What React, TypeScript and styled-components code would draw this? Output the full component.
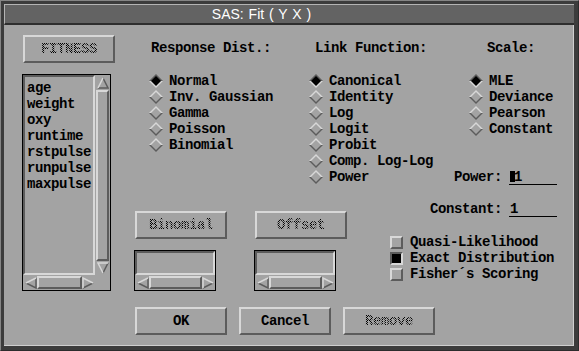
import React from 'react';
import styled, { createGlobalStyle, css } from 'styled-components';

const c = {
  face: '#a3a3a3',
  light: '#d8d8d8',
  dark: '#5c5c5c',
  title: '#636363',
  frame: '#3c3c3c',
};

const GlobalStyle = createGlobalStyle`
  html, body { margin: 0; padding: 0; background: ${c.face}; }
  body { font-family: 'Liberation Mono', 'DejaVu Sans Mono', monospace; }
`;

const monoText = css`
  font-family: 'Liberation Mono', 'DejaVu Sans Mono', monospace;
  font-weight: bold;
  font-size: 14px;
  letter-spacing: -0.4px;
  line-height: 16px;
  color: #000;
  white-space: nowrap;
`;

const raised = css`
  box-sizing: border-box;
  border: 2px solid;
  border-color: ${c.light} ${c.dark} ${c.dark} ${c.light};
`;

const sunken = css`
  box-sizing: border-box;
  border: 2px solid;
  border-color: ${c.dark} ${c.light} ${c.light} ${c.dark};
`;

const Frame = styled.div`
  box-sizing: border-box;
  width: 579px;
  height: 351px;
  background: ${c.frame};
  border-top: 1px solid #858585;
  border-left: 1px solid #858585;
  border-right: 1px solid #2c2c2c;
  border-bottom: 1px solid #2c2c2c;
  padding: 3px 4px 4px 3px;
  display: flex;
  flex-direction: column;
`;

const TitleBar = styled.div`
  box-sizing: border-box;
  height: 21px;
  background: ${c.title};
  border-top: 1px solid #b4b4b4;
  border-left: 1px solid #b4b4b4;
  border-bottom: 2px solid #2e2e2e;
  padding-right: 56px;
  color: #fff;
  font-family: 'Liberation Sans', Arial, sans-serif;
  font-size: 14px;
  word-spacing: 1px;
  display: flex;
  align-items: center;
  justify-content: center;
`;

const Body = styled.div`
  box-sizing: border-box;
  flex: 1;
  background: ${c.face};
  border-right: 1px solid #cfcfcf;
  border-bottom: 1px solid #cfcfcf;
  padding: 10px 0 0 18px;
  display: flex;
`;

const LeftColumn = styled.div`
  width: 93px;
  display: flex;
  flex-direction: column;
`;

const PushButton = styled.div<{ $shift?: number }>`
  ${raised}
  width: 92px;
  height: 28px;
  margin-left: ${p => p.$shift ?? 0}px;
  background: ${c.face};
  display: flex;
  align-items: center;
  justify-content: center;
  ${monoText}
`;

const Stippled = styled.span`
  color: transparent;
  background-image: repeating-conic-gradient(#000 0% 25%, transparent 0% 50%);
  background-size: 2px 2px;
  -webkit-background-clip: text;
  background-clip: text;
`;

const ListBox = styled.div`
  box-sizing: border-box;
  width: 89px;
  height: 217px;
  margin-top: 11px;
  border: 1px solid #000;
  display: grid;
  grid-template-columns: 1fr 15px;
  grid-template-rows: 1fr 15px;
`;

const ListArea = styled.div`
  ${sunken}
  padding: 3px 0 0 2px;
  display: flex;
  flex-direction: column;
  overflow: hidden;
`;

const ListItem = styled.div`
  ${monoText}
`;

const VScroll = styled.div`
  display: flex;
  flex-direction: column;
  align-items: center;
  padding: 2px 0 1px;
  gap: 1px;
`;

const VThumb = styled.div`
  ${raised}
  flex: 1;
  width: 13px;
`;

const HScroll = styled.div`
  display: flex;
  align-items: center;
  padding: 0 1px 0 2px;
`;

const HThumb = styled.div`
  ${raised}
  flex: 1;
  height: 13px;
`;

const Corner = styled.div``;

const SmallBox = styled.div`
  box-sizing: border-box;
  width: 82px;
  height: 41px;
  margin-left: -1px;
  border: 1px solid #000;
  display: grid;
  grid-template-rows: 1fr 15px;
`;

const RightArea = styled.div`
  width: 438px;
  margin-left: 20px;
  display: flex;
  flex-direction: column;
`;

const OptionsRow = styled.div`
  display: grid;
  grid-template-columns: 160px 160px 88px;
  grid-template-rows: auto auto;
  padding-top: 5px;
  margin-left: 14px;
`;

const Group = styled.div<{ $col: string; $row: string }>`
  grid-column: ${p => p.$col};
  grid-row: ${p => p.$row};
  justify-self: start;
  align-self: start;
  width: fit-content;
  display: flex;
  flex-direction: column;
`;

const GroupLabel = styled.div`
  ${monoText}
  text-align: center;
  margin-bottom: 17px;
`;

const RadioItem = styled.div`
  ${monoText}
  height: 16px;
  display: flex;
  align-items: center;
  gap: 6px;
`;

const FieldRow = styled.div`
  ${monoText}
  grid-column: 2 / 4;
  grid-row: 2;
  justify-self: end;
  align-self: end;
  height: 16px;
  display: flex;
  align-items: center;
  gap: 7px;
`;

const FieldInput = styled.div`
  box-sizing: border-box;
  width: 48px;
  height: 16px;
  border-bottom: 1px solid #000;
  display: flex;
  align-items: center;
  padding-left: 1px;
`;

const Cursor = styled.span`
  display: inline-block;
  width: 5px;
  height: 11px;
  background: #000;
  margin-right: -1px;
`;

const MiddleRow = styled.div`
  display: flex;
`;

const ChannelGrid = styled.div`
  display: grid;
  grid-template-columns: 92px 92px;
  column-gap: 28px;
  row-gap: 11px;
  padding-top: 26px;
`;

const SideBlock = styled.div`
  flex: 1;
  display: flex;
  flex-direction: column;
  padding: 16px 16px 0 0;
`;

const ConstantRow = styled(FieldRow)`
  align-self: flex-end;
`;

const CheckList = styled.div`
  margin: 17px 0 0 43px;
  display: flex;
  flex-direction: column;
`;

const CheckItem = styled.div`
  ${monoText}
  height: 16px;
  display: flex;
  align-items: center;
  gap: 7px;
`;

const CheckBox = styled.span<{ $on?: boolean }>`
  box-sizing: border-box;
  width: 13px;
  height: 13px;
  border: 2px solid;
  border-color: ${p =>
    p.$on
      ? `${c.dark} ${c.light} ${c.light} ${c.dark}`
      : `${c.light} ${c.dark} ${c.dark} ${c.light}`};
  background: ${p => (p.$on ? '#000' : c.face)};
`;

const ButtonRow = styled.div`
  display: flex;
  gap: 12px;
  margin-top: 16px;
`;

const Diamond = ({ on }: { on?: boolean }) => (
  <svg width="14" height="14" viewBox="0 0 14 14">
    <polygon points="0,7 7,0 14,7" fill={on ? c.dark : c.light} />
    <polygon points="0,7 7,14 14,7" fill={on ? c.light : c.dark} />
    <polygon points="2,7 7,2 12,7 7,12" fill={on ? '#000' : c.face} />
  </svg>
);

type Dir = 'up' | 'down' | 'left' | 'right';

const Arrow = ({ dir }: { dir: Dir }) => {
  const shapes: Record<Dir, { pts: string; lit: string; shade: string }> = {
    up: { pts: '6,1 11,11 1,11', lit: '1,11 6,1', shade: '6,1 11,11 1,11' },
    down: { pts: '1,1 11,1 6,11', lit: '6,11 1,1 11,1', shade: '11,1 6,11' },
    left: { pts: '1,6 11,1 11,11', lit: '1,6 11,1', shade: '11,1 11,11 1,6' },
    right: { pts: '1,1 11,6 1,11', lit: '1,11 1,1 11,6', shade: '11,6 1,11' },
  };
  const s = shapes[dir];
  return (
    <svg width="12" height="12" viewBox="0 0 12 12">
      <polygon points={s.pts} fill={c.face} />
      <polyline points={s.shade} fill="none" stroke={c.dark} strokeWidth="1.5" />
      <polyline points={s.lit} fill="none" stroke={c.light} strokeWidth="1.5" />
    </svg>
  );
};

const HBar = () => (
  <HScroll>
    <Arrow dir="left" />
    <HThumb />
    <Arrow dir="right" />
  </HScroll>
);

const variables = ['age', 'weight', 'oxy', 'runtime', 'rstpulse', 'runpulse', 'maxpulse'];
const responses = ['Normal', 'Inv. Gaussian', 'Gamma', 'Poisson', 'Binomial'];
const links = ['Canonical', 'Identity', 'Log', 'Logit', 'Probit', 'Comp. Log-Log', 'Power'];
const scales = ['MLE', 'Deviance', 'Pearson', 'Constant'];
const checks = [
  { label: 'Quasi-Likelihood', on: false },
  { label: 'Exact Distribution', on: true },
  { label: 'Fisher´s Scoring', on: false },
];

const RadioGroup = ({
  label,
  items,
  col,
  row,
}: {
  label: string;
  items: string[];
  col: string;
  row: string;
}) => (
  <Group $col={col} $row={row}>
    <GroupLabel>{label}</GroupLabel>
    {items.map((it, i) => (
      <RadioItem key={it}>
        <Diamond on={i === 0} />
        {it}
      </RadioItem>
    ))}
  </Group>
);

export default function App() {
  return (
    <>
      <GlobalStyle />
      <Frame>
        <TitleBar>SAS: Fit ( Y X )</TitleBar>
        <Body>
          <LeftColumn>
            <PushButton $shift={1}>
              <Stippled>FITNESS</Stippled>
            </PushButton>
            <ListBox>
              <ListArea>
                {variables.map(v => (
                  <ListItem key={v}>{v}</ListItem>
                ))}
              </ListArea>
              <VScroll>
                <Arrow dir="up" />
                <VThumb />
                <Arrow dir="down" />
              </VScroll>
              <HBar />
              <Corner />
            </ListBox>
          </LeftColumn>

          <RightArea>
            <OptionsRow>
              <RadioGroup label="Response Dist.:" items={responses} col="1" row="1 / 3" />
              <RadioGroup label="Link Function:" items={links} col="2" row="1 / 3" />
              <RadioGroup label="Scale:" items={scales} col="3" row="1" />
              <FieldRow>
                Power:
                <FieldInput>
                  <Cursor />1
                </FieldInput>
              </FieldRow>
            </OptionsRow>

            <MiddleRow>
              <ChannelGrid>
                <PushButton>
                  <Stippled>Binomial</Stippled>
                </PushButton>
                <PushButton>
                  <Stippled>Offset</Stippled>
                </PushButton>
                <SmallBox>
                  <ListArea />
                  <HBar />
                </SmallBox>
                <SmallBox>
                  <ListArea />
                  <HBar />
                </SmallBox>
              </ChannelGrid>
              <SideBlock>
                <ConstantRow>
                  Constant:
                  <FieldInput>1</FieldInput>
                </ConstantRow>
                <CheckList>
                  {checks.map(ch => (
                    <CheckItem key={ch.label}>
                      <CheckBox $on={ch.on} />
                      {ch.label}
                    </CheckItem>
                  ))}
                </CheckList>
              </SideBlock>
            </MiddleRow>

            <ButtonRow>
              <PushButton>OK</PushButton>
              <PushButton>Cancel</PushButton>
              <PushButton>
                <Stippled>Remove</Stippled>
              </PushButton>
            </ButtonRow>
          </RightArea>
        </Body>
      </Frame>
    </>
  );
}
